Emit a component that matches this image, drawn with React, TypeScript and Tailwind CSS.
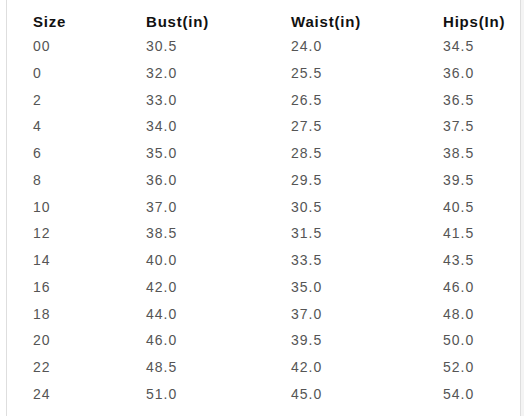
const rows: [string, string, string, string][] = [
  ["00", "30.5", "24.0", "34.5"],
  ["0", "32.0", "25.5", "36.0"],
  ["2", "33.0", "26.5", "36.5"],
  ["4", "34.0", "27.5", "37.5"],
  ["6", "35.0", "28.5", "38.5"],
  ["8", "36.0", "29.5", "39.5"],
  ["10", "37.0", "30.5", "40.5"],
  ["12", "38.5", "31.5", "41.5"],
  ["14", "40.0", "33.5", "43.5"],
  ["16", "42.0", "35.0", "46.0"],
  ["18", "44.0", "37.0", "48.0"],
  ["20", "46.0", "39.5", "50.0"],
  ["22", "48.5", "42.0", "52.0"],
  ["24", "51.0", "45.0", "54.0"],
];

const headers = ["Size", "Bust(in)", "Waist(in)", "Hips(In)"];

export default function App() {
  return (
    <div className="w-[530px] h-[416px] bg-white overflow-hidden font-['Liberation_Sans',Arial,sans-serif]">
      <div className="ml-[6px] w-[518px] h-full border-r-[3px] border-r-[#f4f4f4]">
        <div className="w-[515px] h-full border-l border-r border-[#dedede] pt-[11px] pl-[26px]">
          <div className="grid grid-cols-[113px_145px_152px_1fr] text-[15px] font-bold text-[#111] tracking-[0.8px] leading-[22px]">
            {headers.map((h) => (
              <div key={h}>{h}</div>
            ))}
          </div>
          {rows.map((r) => (
            <div
              key={r[0]}
              className="grid grid-cols-[113px_145px_152px_1fr] text-[14px] text-[#555] tracking-[1px] leading-[26.77px]"
            >
              {r.map((c, i) => (
                <div key={i}>{c}</div>
              ))}
            </div>
          ))}
        </div>
      </div>
    </div>
  );
}
